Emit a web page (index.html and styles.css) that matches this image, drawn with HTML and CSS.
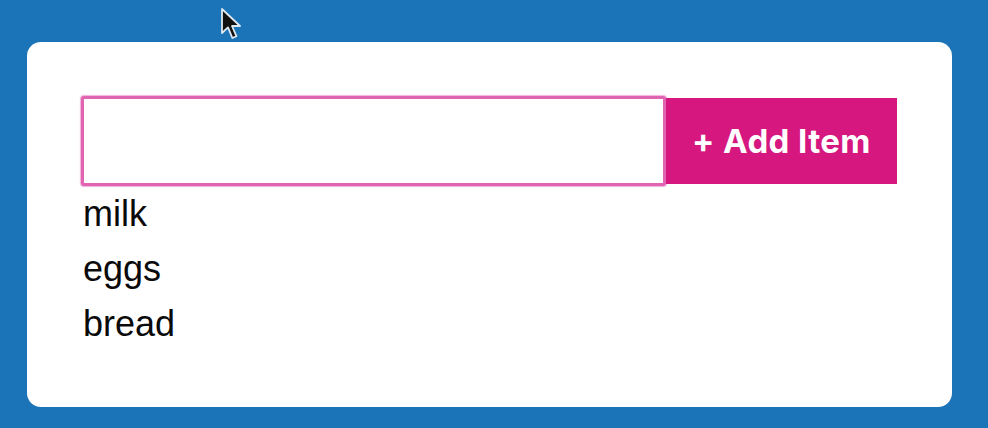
FILE: index.html
```html
<!DOCTYPE html>
<html>
<head>
<meta charset="utf-8">
<link rel="stylesheet" href="styles.css">
</head>
<body>
<div class="card">
  <div class="row">
    <input class="field" type="text">
    <button class="add">+ Add Item</button>
  </div>
  <ul class="list">
    <li>milk</li>
    <li>eggs</li>
    <li>bread</li>
  </ul>
</div>
<svg class="cursor" width="24" height="34" viewBox="0 0 12 17">
  <path d="M1 1 L1 13 L4 10.2 L6.2 15.5 L8.2 14.6 L6 9.5 L10 9.5 Z" fill="#111" stroke="#dfe8f0" stroke-width="0.9" stroke-linejoin="round"/>
</svg>
</body>
</html>
```
FILE: styles.css
```css
html, body {
  margin: 0;
  padding: 0;
}
body {
  background: #1a74b7;
  width: 988px;
  height: 428px;
  overflow: hidden;
  position: relative;
  padding-top: 42px;
  box-sizing: border-box;
  font-family: "Liberation Sans", Arial, sans-serif;
}
.card {
  margin-left: 27px;
  width: 925px;
  height: 365px;
  background: #fff;
  border-radius: 14px;
  padding: 54px 0 0 54px;
  box-sizing: border-box;
}
.row {
  display: flex;
  align-items: center;
}
.field {
  width: 585px;
  height: 90px;
  box-sizing: border-box;
  border: 3px solid #e064b2;
  border-radius: 3px;
  box-shadow: 0 0 1px 1px rgba(224, 100, 178, 0.5);
  outline: none;
  margin: 0;
  padding: 0 12px;
  font-size: 30px;
  background: #fff;
}
.add {
  width: 231px;
  height: 86px;
  margin: 0;
  border: none;
  background: #d5177f;
  color: #fff;
  font-family: Inter, "Liberation Sans", sans-serif;
  font-weight: 700;
  font-size: 33px;
  letter-spacing: 0.4px;
  padding: 0;
}
.list {
  list-style: none;
  margin: 0;
  padding: 0 0 0 2px;
  font-size: 36px;
  line-height: 55px;
  color: #0a0a0a;
}
.cursor {
  position: absolute;
  left: 220px;
  top: 7px;
}
```
